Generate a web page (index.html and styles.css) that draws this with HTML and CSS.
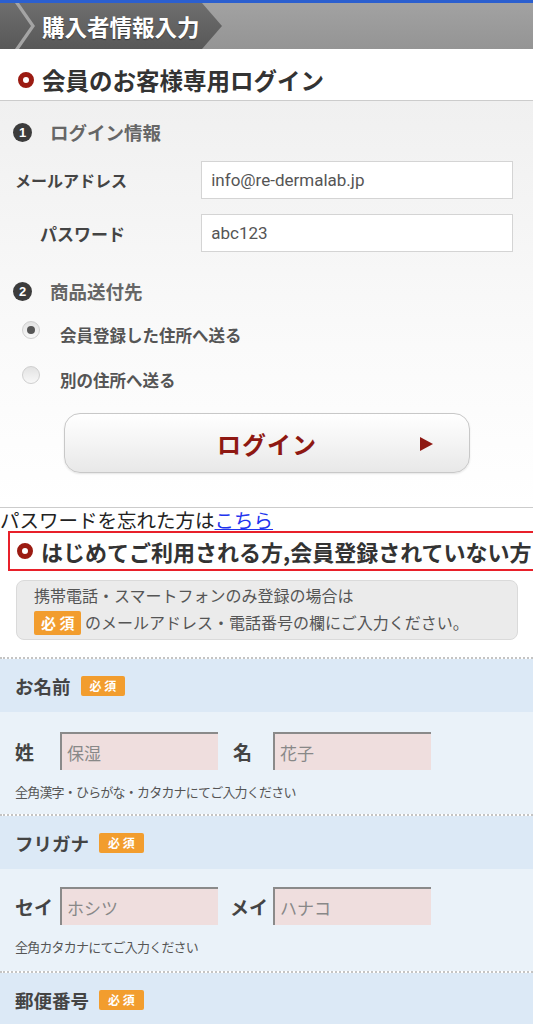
FILE: index.html
```html
<!DOCTYPE html>
<html lang="ja">
<head>
  <meta charset="UTF-8">
  <meta name="viewport" content="width=device-width, initial-scale=1.0">
  <title>購入者情報入力</title>
  <link rel="stylesheet" href="styles.css">
</head>
<body>
  <div class="step-bar">
    <div class="step-tab">購入者情報入力</div>
  </div>

  <h2 class="sec-title"><span class="ring"></span>会員のお客様専用ログイン</h2>

  <div class="login-box">
    <div class="sub-title"><span class="num">1</span>ログイン情報</div>
    <div class="field-row">
      <label class="field-label">メールアドレス</label>
      <input class="text-input" type="text" value="info@re-dermalab.jp">
    </div>
    <div class="field-row">
      <label class="field-label indent">パスワード</label>
      <input class="text-input" type="text" value="abc123">
    </div>

    <div class="sub-title second"><span class="num">2</span>商品送付先</div>
    <div class="radio-row"><span class="radio checked"></span>会員登録した住所へ送る</div>
    <div class="radio-row"><span class="radio"></span>別の住所へ送る</div>

    <button class="login-btn">ログイン<span class="arrow"></span></button>
  </div>

  <div class="forgot">パスワードを忘れた方は<a href="#">こちら</a></div>

  <div class="new-title"><span class="ring"></span>はじめてご利用される方,会員登録されていない方</div>

  <div class="notice">
    携帯電話・スマートフォンのみ登録の場合は<br>
    <span class="req big">必 須</span> のメールアドレス・電話番号の欄にご入力ください。
  </div>

  <div class="form-sec">
    <div class="form-head">お名前<span class="req">必 須</span></div>
    <div class="form-body">
      <div class="name-row">
        <span class="name-label">姓</span>
        <input class="name-input" type="text" value="保湿">
        <span class="name-label second">名</span>
        <input class="name-input" type="text" value="花子">
      </div>
      <div class="hint">全角漢字・ひらがな・カタカナにてご入力ください</div>
    </div>
  </div>

  <div class="form-sec">
    <div class="form-head">フリガナ<span class="req">必 須</span></div>
    <div class="form-body kana">
      <div class="name-row">
        <span class="name-label">セイ</span>
        <input class="name-input" type="text" value="ホシツ">
        <span class="name-label second">メイ</span>
        <input class="name-input" type="text" value="ハナコ">
      </div>
      <div class="hint">全角カタカナにてご入力ください</div>
    </div>
  </div>

  <div class="form-sec">
    <div class="form-head">郵便番号<span class="req">必 須</span></div>
  </div>
</body>
</html>
```

FILE: styles.css
```css
body {
  margin: 0;
  padding: 0;
  font-family: 'Noto Sans CJK JP', 'Noto Sans', sans-serif;
  background: #ffffff;
  color: #333333;
  overflow-x: hidden;
  width: 533px;
}
.step-bar {
  border-top: 3px solid #2b5fcf;
  height: 46px;
  background: linear-gradient(#a2a2a2, #949494);
}
.step-tab {
  position: relative;
  width: 180px;
  height: 46px;
  padding-left: 42px;
  color: #ffffff;
  font-size: 22.5px;
  font-weight: bold;
  line-height: 46px;
  background: linear-gradient(#6e6e6e, #585858);
  clip-path: polygon(0 0, 202px 0, 222px 50%, 202px 100%, 0 100%);
  text-shadow: 0 1px 1px rgba(0,0,0,0.45);
}
.step-tab::before {
  content: "";
  position: absolute;
  left: 0;
  top: 0;
  width: 40px;
  height: 46px;
  background: #a4a4a4;
  clip-path: polygon(15px 0, 19px 0, 35px 50%, 19px 100%, 15px 100%, 31px 50%);
}
.sec-title {
  margin: 0;
  padding: 14px 0 3px 18px;
  font-size: 23.5px;
  line-height: 34px;
  font-weight: bold;
  color: #333333;
  display: flex;
  align-items: center;
  border-bottom: 1px solid #cccccc;
}
.ring {
  display: inline-block;
  width: 6px;
  height: 6px;
  border: 5px solid #9b1b12;
  border-radius: 50%;
  margin-right: 8px;
  flex-shrink: 0;
}
.login-box {
  background: linear-gradient(#f0f0f0, #fafafa 60%, #ffffff);
  padding: 18px 20px 34px 13px;
  border-bottom: 1px solid #cccccc;
}
.sub-title {
  display: flex;
  align-items: center;
  height: 26px;
  font-size: 18.5px;
  font-weight: bold;
  color: #666666;
  margin-bottom: 16px;
}
.sub-title.second {
  margin-top: 26px;
  margin-bottom: 8px;
}
.num {
  width: 19px;
  height: 19px;
  border-radius: 50%;
  background: #3c3c3c;
  color: #ffffff;
  font-family: 'Liberation Sans', sans-serif;
  font-size: 13px;
  line-height: 19px;
  text-align: center;
  margin-right: 18px;
}
.field-row {
  display: flex;
  align-items: center;
  margin-bottom: 15px;
}
.field-label {
  width: 187px;
  padding-left: 2px;
  font-size: 16px;
  font-weight: bold;
  color: #444444;
}
.field-label.indent {
  padding-left: 27px;
  width: 162px;
  font-size: 17px;
}
.text-input {
  width: 313px;
  height: 38px;
  box-sizing: border-box;
  border: 1px solid #d4d4d4;
  background: #ffffff;
  padding: 0 9px;
  font-family: Roboto, 'Noto Sans', sans-serif;
  font-size: 17px;
  color: #555555;
}
.radio-row {
  display: flex;
  align-items: center;
  font-size: 16.5px;
  font-weight: bold;
  color: #555555;
  padding-left: 9px;
  height: 45px;
}
.radio {
  width: 18px;
  height: 18px;
  border-radius: 50%;
  border: 1px solid #cfcfcf;
  background: linear-gradient(#e2e2e2, #f8f8f8);
  box-sizing: border-box;
  margin-right: 20px;
  margin-top: -10px;
  display: flex;
  align-items: center;
  justify-content: center;
}
.radio.checked::after {
  content: "";
  width: 8px;
  height: 8px;
  border-radius: 50%;
  background: #555555;
}
.login-btn {
  display: flex;
  align-items: center;
  justify-content: center;
  position: relative;
  width: 406px;
  height: 60px;
  margin: 11px 0 0 51px;
  border: 1px solid #c8c8c8;
  border-radius: 16px;
  background: linear-gradient(#ffffff, #f4f4f4 50%, #e8e8e8);
  box-shadow: 0 1px 2px rgba(0,0,0,0.1);
  font-family: 'Noto Sans CJK JP', sans-serif;
  font-size: 24px;
  font-weight: bold;
  color: #8e1812;
  letter-spacing: 1px;
}
.arrow {
  position: absolute;
  right: 36px;
  top: 23px;
  width: 0;
  height: 0;
  border-left: 13px solid #8e1812;
  border-top: 7px solid transparent;
  border-bottom: 7px solid transparent;
}
.forgot {
  font-size: 19.5px;
  line-height: 22px;
  color: #222222;
  padding-top: 1px;
}
.forgot a {
  color: #2233ee;
}
.new-title {
  display: flex;
  align-items: center;
  white-space: nowrap;
  margin-left: 8px;
  height: 36px;
  border: 2px solid #e8202a;
  border-right: none;
  padding-left: 7px;
  font-size: 22px;
  font-weight: bold;
  color: #333333;
}
.notice {
  margin: 9px 15px 17px 16px;
  padding: 1px 17px 3px;
  background: #ebebeb;
  border: 1px solid #dadada;
  border-radius: 8px;
  font-size: 16px;
  line-height: 27px;
  color: #555555;
}
.req {
  display: inline-block;
  background: #f29d2e;
  color: #ffffff;
  font-size: 12px;
  font-weight: bold;
  line-height: 20px;
  padding: 0 9px;
  border-radius: 2px;
  margin-left: 10px;
}
.req.big {
  margin-left: 0;
  font-size: 15px;
  line-height: 24px;
  padding: 0 7px;
}
.form-sec {
  border-top: 2px dotted #c4c4c4;
}
.form-head {
  background: #dce9f6;
  height: 53px;
  display: flex;
  align-items: center;
  padding-left: 15px;
  font-size: 18.5px;
  font-weight: bold;
  color: #444444;
}
.form-body {
  background: #eaf2f9;
  padding: 20px 15px 14px;
}
.form-body.kana {
  padding-top: 18px;
  padding-bottom: 16px;
}
.name-row {
  display: flex;
  align-items: center;
}
.name-label {
  font-size: 19px;
  font-weight: bold;
  color: #444444;
  width: 45px;
}
.name-label.second {
  width: 40px;
  margin-left: 15px;
}
.kana .name-label.second {
  width: 43px;
  margin-left: 12px;
}
.name-input {
  width: 158px;
  height: 38px;
  box-sizing: border-box;
  border: none;
  border-top: 2px solid #8a8a8a;
  border-left: 2px solid #8a8a8a;
  background: #efdede;
  padding: 0 5px;
  font-family: 'Noto Sans CJK JP', sans-serif;
  font-size: 17px;
  color: #888888;
}
.hint {
  font-size: 13px;
  line-height: 17px;
  color: #555555;
  margin-top: 13px;
  letter-spacing: -0.8px;
}
```
